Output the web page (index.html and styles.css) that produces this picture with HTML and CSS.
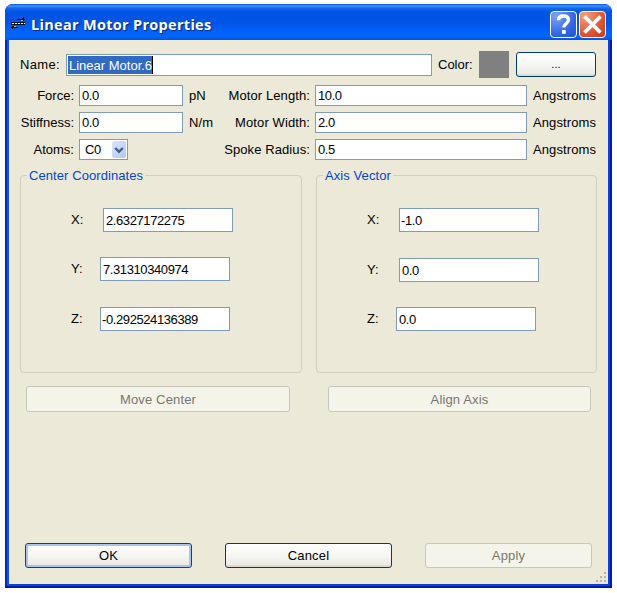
FILE: index.html
```
<!DOCTYPE html>
<html lang="en">
<head>
<meta charset="utf-8">
<title>Linear Motor Properties</title>
<link rel="stylesheet" href="styles.css">
</head>
<body>
<main class="window">
  <header class="titlebar">
    <svg class="app-icon" width="15" height="13" viewBox="0 0 15 13" shape-rendering="crispEdges">
      <path d="M6 2.5h8M11 1.5h2M12 0.5h1M12 3.5h1M0 5.5h14M0 7.5h14M0 10.5h7M1 9.5h2M1 11.5h1" stroke="#101018" fill="none"/>
      <path d="M1 6.5h2M4 6.5h2M7 6.5h2M10 6.5h2M13 6.5h1" stroke="#e8e8e8" fill="none"/>
      <path d="M0 6.5h1M3 6.5h1M6 6.5h1M9 6.5h1M12 6.5h1" stroke="#222" fill="none"/>
      <path d="M10 3.5h2M3 9.5h2" stroke="#b9b3b0" fill="none"/>
    </svg>
    <h1>Linear Motor Properties</h1>
    <span class="caption-button help"><svg width="25" height="25" viewBox="0 0 25 25"><path d="M7.5 8.2C7.5 5.2 9.5 4 12.5 4s5 1.5 5 4.1c0 3.3-4.7 3.5-4.7 7.4" fill="none" stroke="#fff" stroke-width="3.4"/><path d="M11 18h3.8v3.8H11z" fill="#fff"/></svg></span>
    <span class="caption-button close"><svg width="25" height="25" viewBox="0 0 25 25"><path d="M4.5 4.5l16 16M20.5 4.5l-16 16" stroke="#fff" stroke-width="3.8"/></svg></span>
  </header>
  <section class="content">
    <div class="name-row">
      <label>Name:</label>
      <div class="field name-field"><span class="selected">Linear Motor.6</span></div>
      <label class="color-label">Color:</label>
      <span class="swatch"></span>
      <button class="more">...</button>
    </div>
    <div class="properties">
      <label>Force:</label><div class="field num">0.0</div><span class="unit">pN</span>
      <label>Motor Length:</label><div class="field num">10.0</div><span class="unit">Angstroms</span>
      <label>Stiffness:</label><div class="field num">0.0</div><span class="unit">N/m</span>
      <label>Motor Width:</label><div class="field num">2.0</div><span class="unit">Angstroms</span>
      <label>Atoms:</label>
      <div class="field select"><span>C0</span><span class="arrow"><svg width="14" height="18" viewBox="0 0 14 18"><path d="M3.2 7L7 10.8 10.8 7" fill="none" stroke="#435b86" stroke-width="2.4"/></svg></span></div>
      <span></span>
      <label>Spoke Radius:</label><div class="field num">0.5</div><span class="unit">Angstroms</span>
    </div>
    <div class="groups">
      <fieldset class="center-group">
        <legend>Center Coordinates</legend>
        <div class="coord wide-gap"><label>X:</label><div class="field num">2.6327172275</div></div>
        <div class="coord y"><label>Y:</label><div class="field num">7.31310340974</div></div>
        <div class="coord"><label>Z:</label><div class="field num flush">-0.292524136389</div></div>
      </fieldset>
      <fieldset class="axis-group">
        <legend>Axis Vector</legend>
        <div class="coord wide-gap"><label>X:</label><div class="field num flush">-1.0</div></div>
        <div class="coord wide-gap y"><label>Y:</label><div class="field num">0.0</div></div>
        <div class="coord"><label>Z:</label><div class="field num">0.0</div></div>
      </fieldset>
    </div>
    <div class="actions"><button disabled>Move Center</button><button disabled>Align Axis</button></div>
    <footer><button class="default">OK</button><button>Cancel</button><button disabled>Apply</button></footer>
  </section>
  <svg class="grip" width="11" height="11" viewBox="0 0 11 11" shape-rendering="crispEdges"><path d="M8 0h2v2H8zM4 4h2v2H4zM8 4h2v2H8zM0 8h2v2H0zM4 8h2v2H4zM8 8h2v2H8z" fill="#b8b4a3"/></svg>
</main>
</body>
</html>
```
FILE: styles.css
```
* { box-sizing: border-box; }
body {
  margin: 0;
  padding: 4px 5px;
  background: #fff;
  color: #000;
  font: 13px/15px "Liberation Sans", Arial, sans-serif;
}
.window {
  position: relative;
  width: 607px;
  height: 584px;
  padding: 0 2px 2px;
  border: solid #0019a8;
  border-width: 0 2px 2px;
  border-left-color: #0029bd;
  border-radius: 8px 8px 0 0;
  background: #ece9d8;
  box-shadow: inset 2px 0 #1450dc, inset -2px 0 #0840dc, inset 0 -2px #0840dc;
}
.titlebar {
  display: flex;
  align-items: center;
  height: 36px;
  margin: 0 -4px;
  padding: 2px 6px 0 7px;
  border-radius: 8px 8px 0 0;
  background: linear-gradient(#0a58d8 0, #3a94ff 2px, #1769ee 4px, #0054e3 8px, #0055e5 19px, #0261fa 27px, #0266ff 32px, #005cee 35px, #004fd8 36px);
}
.app-icon { margin: 0 5px 0 -1px; }
h1 {
  flex: 1;
  margin: 3px 0 0;
  color: #fff;
  font: bold 14.5px/20px "Open Sans", sans-serif;
  letter-spacing: .3px;
  text-shadow: 1px 1px 1px #0a2a7a;
}
.caption-button {
  width: 27px;
  height: 27px;
  margin: 2px 0 0 2px;
  border: 1px solid #fff;
  border-radius: 4px;
}
.caption-button svg { display: block; }
.help { background: radial-gradient(circle at 20% 15%, #7da3f4, #2f65e4 65%, #2353cb); }
.close { background: radial-gradient(circle at 20% 15%, #f2a080, #df512c 65%, #b93a18); }
.content { padding: 10px 11px 0; }
.name-row { display: flex; align-items: center; height: 29px; }
.name-row > label:first-child { width: 46px; letter-spacing: .35px; }
.field {
  height: 22px;
  padding: 3px 0 0 2px;
  border: 1px solid #7f9db9;
  background: #fff;
  white-space: nowrap;
}
.name-field { width: 366px; margin-right: 6px; padding: 1px 0 0 1px; height: 22px; }
.selected {
  display: inline-block;
  height: 18px;
  padding: 2px 0 0 1px;
  border-right: 1px solid #000;
  background: #316ac5;
  color: #fff;
}
.color-label { width: 41px; }
.swatch { width: 30px; height: 27px; margin-right: 7px; background: #808080; }
button {
  display: block;
  height: 25px;
  padding: 0;
  border: 1px solid #003c74;
  border-radius: 3px;
  background: linear-gradient(#fff, #f5f5f1 55%, #ecebe5 88%, #d7d1c6);
  color: #000;
  font: 13px/15px "Liberation Sans", Arial, sans-serif;
  letter-spacing: .15px;
}
.more { width: 80px; font-size: 11px; }
button:disabled { border-color: #c9c7ba; background: #f5f4ea; color: #77776f; letter-spacing: .15px; }
.default { box-shadow: inset 0 0 0 2px #a7c5ef; border-color: #173e78; }
.properties {
  display: grid;
  grid-template-columns: 54px 104px 23px 94px 212px 64px;
  grid-template-rows: repeat(3, 21px);
  column-gap: 5px;
  row-gap: 6px;
  margin-top: 6px;
}
.properties > label { text-align: right; white-space: nowrap; padding-top: 3px; }
.properties > label:nth-child(6n+4) { margin-left: -10px; letter-spacing: .1px; }
.properties > .field { height: 21px; padding-top: 2px; }
.unit { padding: 3px 0 0 1px; white-space: nowrap; letter-spacing: .1px; }
.num { letter-spacing: -.4px; }
.properties > .select {
  display: flex;
  align-items: center;
  justify-content: space-between;
  width: 49px;
  padding: 0 0 0 5px;
  letter-spacing: -.3px;
}
.arrow { width: 14px; height: 17px; margin-right: 1px; border-radius: 2px; background: linear-gradient(135deg, #dbe5fd, #b1c8f5); }
.groups { display: flex; gap: 14px; margin-top: 8px; }
fieldset {
  width: 282px;
  height: 205px;
  margin: 0;
  padding: 25px 0 0 50px;
  border: 1px solid #d0d0bf;
  border-radius: 4px;
}
.axis-group { width: 281px; }
legend { margin-left: -44px; padding: 0 2px; color: #0046d5; letter-spacing: .08px; }
.coord { display: flex; height: 24px; margin-bottom: 25px; }
.coord label { width: 29px; padding-top: 4px; }
.coord.wide-gap label { width: 32px; }
.coord.y { margin-bottom: 26px; }
.axis-group .coord:nth-of-type(1) { margin-bottom: 26px; }
.axis-group .coord.y { margin-bottom: 25px; }
.coord .field { width: 130px; height: 24px; padding-top: 4px; }
.axis-group .field { width: 140px; }
.coord .flush { padding-left: 1px; }
.actions { display: flex; gap: 38px; margin: 13px 0 0 6px; }
.actions button { width: 264px; height: 26px; }
.actions button:last-child { width: 263px; }
footer { display: flex; gap: 33px; margin: 131px 0 0 5px; }
footer button { width: 167px; }
.grip { position: absolute; right: 3px; bottom: 3px; }
```
